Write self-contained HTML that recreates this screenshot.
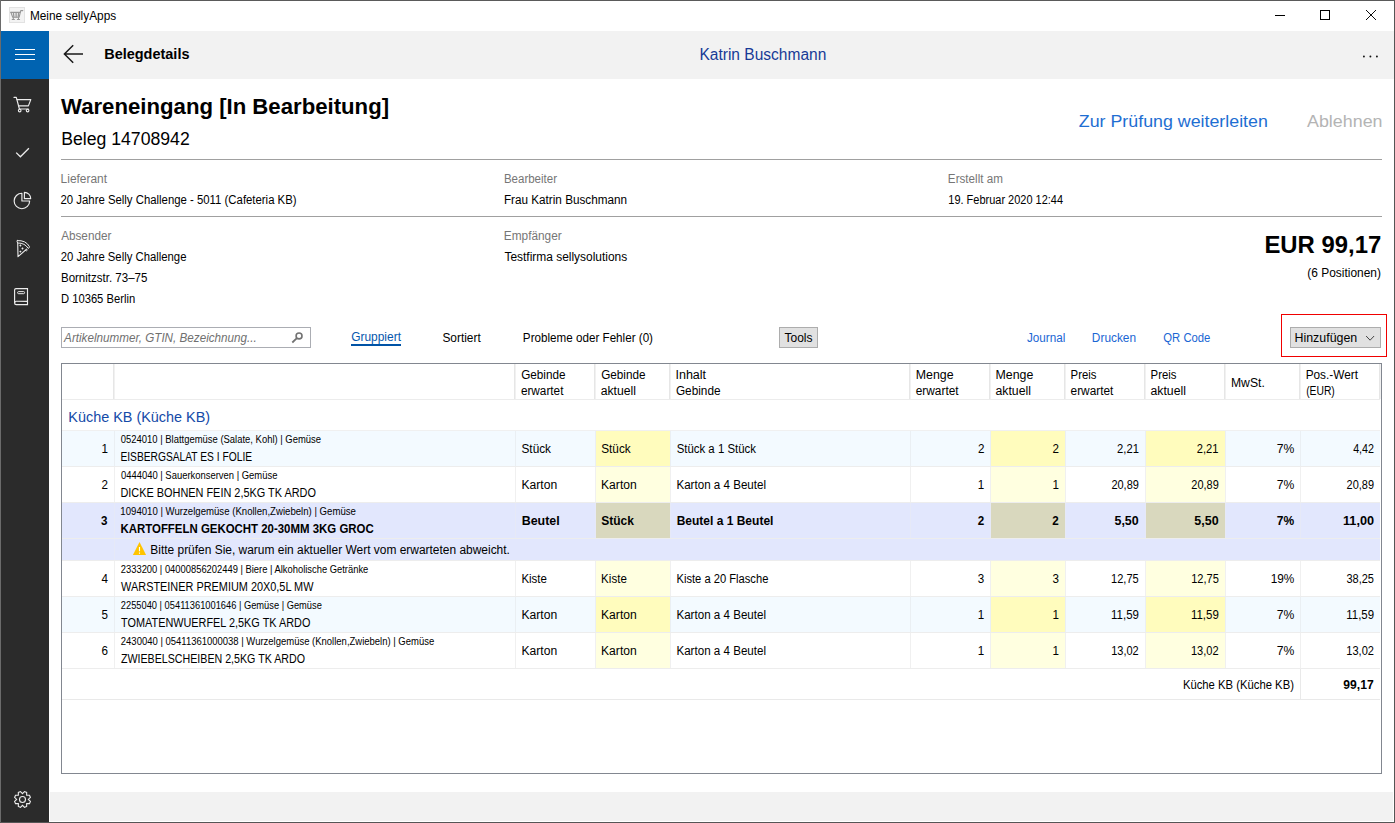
<!DOCTYPE html>
<html lang="de"><head><meta charset="utf-8"><title>Meine sellyApps</title>
<style>
html,body{margin:0;padding:0;width:1395px;height:823px;overflow:hidden;background:#fff;}
body{position:relative;font-family:"Liberation Sans",sans-serif;color:#000;}
.b{position:absolute;}
.t{position:absolute;white-space:nowrap;transform-origin:0 0;}
svg{position:absolute;overflow:visible;}
</style></head><body>
<div class="b" style="left:1px;top:31px;width:1393px;height:48px;background:#f2f2f2;"></div>
<div class="b" style="left:1px;top:31px;width:48px;height:48px;background:#0063b1;"></div>
<div class="b" style="left:1px;top:79px;width:48px;height:743px;background:#2b2b2b;"></div>
<div class="b" style="left:50px;top:792px;width:1343px;height:29px;background:#f2f2f2;"></div>
<div class="b" style="left:15px;top:49px;width:20px;height:1px;background:#fff;"></div>
<div class="b" style="left:15px;top:54px;width:20px;height:1px;background:#fff;"></div>
<div class="b" style="left:15px;top:59px;width:20px;height:1px;background:#fff;"></div>
<div class="b" style="left:61px;top:159px;width:1321px;height:1px;background:#a0a0a0;"></div>
<div class="b" style="left:61px;top:216px;width:1321px;height:1px;background:#a0a0a0;"></div>
<div class="b" style="left:61px;top:327px;width:250px;height:21px;background:#fff;box-sizing:border-box;border:1px solid #abadb3;"></div>
<div class="b" style="left:351px;top:344px;width:50px;height:2px;background:#0053a6;"></div>
<div class="b" style="left:779px;top:327px;width:39px;height:21px;background:#e1e1e1;box-sizing:border-box;border:1px solid #adadad;"></div>
<div class="b" style="left:1281px;top:314px;width:106px;height:43px;background:transparent;box-sizing:border-box;border:1px solid #f00000;"></div>
<div class="b" style="left:1290px;top:327px;width:91px;height:21px;background:#e1e1e1;box-sizing:border-box;border:1px solid #adadad;"></div>
<div class="b" style="left:61px;top:363px;width:1321px;height:411px;background:#fff;box-sizing:border-box;border:1px solid #828790;"></div>
<div class="b" style="left:113px;top:364px;width:1px;height:35px;background:#e6e6e6;"></div>
<div class="b" style="left:114px;top:364px;width:1px;height:35px;background:#f1f1f1;"></div>
<div class="b" style="left:514px;top:364px;width:1px;height:35px;background:#e6e6e6;"></div>
<div class="b" style="left:515px;top:364px;width:1px;height:35px;background:#f1f1f1;"></div>
<div class="b" style="left:594px;top:364px;width:1px;height:35px;background:#e6e6e6;"></div>
<div class="b" style="left:595px;top:364px;width:1px;height:35px;background:#f1f1f1;"></div>
<div class="b" style="left:669px;top:364px;width:1px;height:35px;background:#e6e6e6;"></div>
<div class="b" style="left:670px;top:364px;width:1px;height:35px;background:#f1f1f1;"></div>
<div class="b" style="left:909px;top:364px;width:1px;height:35px;background:#e6e6e6;"></div>
<div class="b" style="left:910px;top:364px;width:1px;height:35px;background:#f1f1f1;"></div>
<div class="b" style="left:989px;top:364px;width:1px;height:35px;background:#e6e6e6;"></div>
<div class="b" style="left:990px;top:364px;width:1px;height:35px;background:#f1f1f1;"></div>
<div class="b" style="left:1064px;top:364px;width:1px;height:35px;background:#e6e6e6;"></div>
<div class="b" style="left:1065px;top:364px;width:1px;height:35px;background:#f1f1f1;"></div>
<div class="b" style="left:1144px;top:364px;width:1px;height:35px;background:#e6e6e6;"></div>
<div class="b" style="left:1145px;top:364px;width:1px;height:35px;background:#f1f1f1;"></div>
<div class="b" style="left:1224px;top:364px;width:1px;height:35px;background:#e6e6e6;"></div>
<div class="b" style="left:1225px;top:364px;width:1px;height:35px;background:#f1f1f1;"></div>
<div class="b" style="left:1299px;top:364px;width:1px;height:35px;background:#e6e6e6;"></div>
<div class="b" style="left:1300px;top:364px;width:1px;height:35px;background:#f1f1f1;"></div>
<div class="b" style="left:1379px;top:364px;width:1px;height:35px;background:#e6e6e6;"></div>
<div class="b" style="left:1380px;top:364px;width:1px;height:35px;background:#f1f1f1;"></div>
<div class="b" style="left:62px;top:399px;width:1318px;height:1px;background:#ececec;"></div>
<div class="b" style="left:62px;top:430px;width:1318px;height:1px;background:#f0f0f0;"></div>
<div class="b" style="left:62px;top:431px;width:1318px;height:35px;background:#f3faff;"></div>
<div class="b" style="left:596px;top:431px;width:74px;height:35px;background:#fffcbd;"></div>
<div class="b" style="left:991px;top:431px;width:74px;height:35px;background:#fffcbd;"></div>
<div class="b" style="left:1146px;top:431px;width:79px;height:35px;background:#fffcbd;"></div>
<div class="b" style="left:114px;top:431px;width:1px;height:35px;background:#eaeff3;"></div>
<div class="b" style="left:515px;top:431px;width:1px;height:35px;background:#eaeff3;"></div>
<div class="b" style="left:595px;top:431px;width:1px;height:35px;background:#eaeff3;"></div>
<div class="b" style="left:670px;top:431px;width:1px;height:35px;background:#eaeff3;"></div>
<div class="b" style="left:910px;top:431px;width:1px;height:35px;background:#eaeff3;"></div>
<div class="b" style="left:990px;top:431px;width:1px;height:35px;background:#eaeff3;"></div>
<div class="b" style="left:1065px;top:431px;width:1px;height:35px;background:#eaeff3;"></div>
<div class="b" style="left:1145px;top:431px;width:1px;height:35px;background:#eaeff3;"></div>
<div class="b" style="left:1225px;top:431px;width:1px;height:35px;background:#eaeff3;"></div>
<div class="b" style="left:1300px;top:431px;width:1px;height:35px;background:#eaeff3;"></div>
<div class="b" style="left:62px;top:466px;width:1318px;height:1px;background:#ededed;"></div>
<div class="b" style="left:62px;top:467px;width:1318px;height:35px;background:#ffffff;"></div>
<div class="b" style="left:596px;top:467px;width:74px;height:35px;background:#ffffe0;"></div>
<div class="b" style="left:991px;top:467px;width:74px;height:35px;background:#ffffe0;"></div>
<div class="b" style="left:1146px;top:467px;width:79px;height:35px;background:#ffffe0;"></div>
<div class="b" style="left:114px;top:467px;width:1px;height:35px;background:#f0f0f0;"></div>
<div class="b" style="left:515px;top:467px;width:1px;height:35px;background:#f0f0f0;"></div>
<div class="b" style="left:595px;top:467px;width:1px;height:35px;background:#f0f0f0;"></div>
<div class="b" style="left:670px;top:467px;width:1px;height:35px;background:#f0f0f0;"></div>
<div class="b" style="left:910px;top:467px;width:1px;height:35px;background:#f0f0f0;"></div>
<div class="b" style="left:990px;top:467px;width:1px;height:35px;background:#f0f0f0;"></div>
<div class="b" style="left:1065px;top:467px;width:1px;height:35px;background:#f0f0f0;"></div>
<div class="b" style="left:1145px;top:467px;width:1px;height:35px;background:#f0f0f0;"></div>
<div class="b" style="left:1225px;top:467px;width:1px;height:35px;background:#f0f0f0;"></div>
<div class="b" style="left:1300px;top:467px;width:1px;height:35px;background:#f0f0f0;"></div>
<div class="b" style="left:62px;top:502px;width:1318px;height:1px;background:#ededed;"></div>
<div class="b" style="left:62px;top:503px;width:1318px;height:35px;background:#e2e7fd;"></div>
<div class="b" style="left:596px;top:503px;width:74px;height:35px;background:#d9d8be;"></div>
<div class="b" style="left:991px;top:503px;width:74px;height:35px;background:#d9d8be;"></div>
<div class="b" style="left:1146px;top:503px;width:79px;height:35px;background:#d9d8be;"></div>
<div class="b" style="left:114px;top:503px;width:1px;height:35px;background:#e6e9f7;"></div>
<div class="b" style="left:515px;top:503px;width:1px;height:35px;background:#e6e9f7;"></div>
<div class="b" style="left:595px;top:503px;width:1px;height:35px;background:#e6e9f7;"></div>
<div class="b" style="left:670px;top:503px;width:1px;height:35px;background:#e6e9f7;"></div>
<div class="b" style="left:910px;top:503px;width:1px;height:35px;background:#e6e9f7;"></div>
<div class="b" style="left:990px;top:503px;width:1px;height:35px;background:#e6e9f7;"></div>
<div class="b" style="left:1065px;top:503px;width:1px;height:35px;background:#e6e9f7;"></div>
<div class="b" style="left:1145px;top:503px;width:1px;height:35px;background:#e6e9f7;"></div>
<div class="b" style="left:1225px;top:503px;width:1px;height:35px;background:#e6e9f7;"></div>
<div class="b" style="left:1300px;top:503px;width:1px;height:35px;background:#e6e9f7;"></div>
<div class="b" style="left:62px;top:538px;width:1318px;height:1px;background:#ededed;"></div>
<div class="b" style="left:62px;top:561px;width:1318px;height:35px;background:#ffffff;"></div>
<div class="b" style="left:596px;top:561px;width:74px;height:35px;background:#ffffe0;"></div>
<div class="b" style="left:991px;top:561px;width:74px;height:35px;background:#ffffe0;"></div>
<div class="b" style="left:1146px;top:561px;width:79px;height:35px;background:#ffffe0;"></div>
<div class="b" style="left:114px;top:561px;width:1px;height:35px;background:#f0f0f0;"></div>
<div class="b" style="left:515px;top:561px;width:1px;height:35px;background:#f0f0f0;"></div>
<div class="b" style="left:595px;top:561px;width:1px;height:35px;background:#f0f0f0;"></div>
<div class="b" style="left:670px;top:561px;width:1px;height:35px;background:#f0f0f0;"></div>
<div class="b" style="left:910px;top:561px;width:1px;height:35px;background:#f0f0f0;"></div>
<div class="b" style="left:990px;top:561px;width:1px;height:35px;background:#f0f0f0;"></div>
<div class="b" style="left:1065px;top:561px;width:1px;height:35px;background:#f0f0f0;"></div>
<div class="b" style="left:1145px;top:561px;width:1px;height:35px;background:#f0f0f0;"></div>
<div class="b" style="left:1225px;top:561px;width:1px;height:35px;background:#f0f0f0;"></div>
<div class="b" style="left:1300px;top:561px;width:1px;height:35px;background:#f0f0f0;"></div>
<div class="b" style="left:62px;top:596px;width:1318px;height:1px;background:#ededed;"></div>
<div class="b" style="left:62px;top:597px;width:1318px;height:35px;background:#f3faff;"></div>
<div class="b" style="left:596px;top:597px;width:74px;height:35px;background:#fffcbd;"></div>
<div class="b" style="left:991px;top:597px;width:74px;height:35px;background:#fffcbd;"></div>
<div class="b" style="left:1146px;top:597px;width:79px;height:35px;background:#fffcbd;"></div>
<div class="b" style="left:114px;top:597px;width:1px;height:35px;background:#eaeff3;"></div>
<div class="b" style="left:515px;top:597px;width:1px;height:35px;background:#eaeff3;"></div>
<div class="b" style="left:595px;top:597px;width:1px;height:35px;background:#eaeff3;"></div>
<div class="b" style="left:670px;top:597px;width:1px;height:35px;background:#eaeff3;"></div>
<div class="b" style="left:910px;top:597px;width:1px;height:35px;background:#eaeff3;"></div>
<div class="b" style="left:990px;top:597px;width:1px;height:35px;background:#eaeff3;"></div>
<div class="b" style="left:1065px;top:597px;width:1px;height:35px;background:#eaeff3;"></div>
<div class="b" style="left:1145px;top:597px;width:1px;height:35px;background:#eaeff3;"></div>
<div class="b" style="left:1225px;top:597px;width:1px;height:35px;background:#eaeff3;"></div>
<div class="b" style="left:1300px;top:597px;width:1px;height:35px;background:#eaeff3;"></div>
<div class="b" style="left:62px;top:632px;width:1318px;height:1px;background:#ededed;"></div>
<div class="b" style="left:62px;top:633px;width:1318px;height:35px;background:#ffffff;"></div>
<div class="b" style="left:596px;top:633px;width:74px;height:35px;background:#ffffe0;"></div>
<div class="b" style="left:991px;top:633px;width:74px;height:35px;background:#ffffe0;"></div>
<div class="b" style="left:1146px;top:633px;width:79px;height:35px;background:#ffffe0;"></div>
<div class="b" style="left:114px;top:633px;width:1px;height:35px;background:#f0f0f0;"></div>
<div class="b" style="left:515px;top:633px;width:1px;height:35px;background:#f0f0f0;"></div>
<div class="b" style="left:595px;top:633px;width:1px;height:35px;background:#f0f0f0;"></div>
<div class="b" style="left:670px;top:633px;width:1px;height:35px;background:#f0f0f0;"></div>
<div class="b" style="left:910px;top:633px;width:1px;height:35px;background:#f0f0f0;"></div>
<div class="b" style="left:990px;top:633px;width:1px;height:35px;background:#f0f0f0;"></div>
<div class="b" style="left:1065px;top:633px;width:1px;height:35px;background:#f0f0f0;"></div>
<div class="b" style="left:1145px;top:633px;width:1px;height:35px;background:#f0f0f0;"></div>
<div class="b" style="left:1225px;top:633px;width:1px;height:35px;background:#f0f0f0;"></div>
<div class="b" style="left:1300px;top:633px;width:1px;height:35px;background:#f0f0f0;"></div>
<div class="b" style="left:62px;top:668px;width:1318px;height:1px;background:#ededed;"></div>
<div class="b" style="left:62px;top:539px;width:1318px;height:21px;background:#e2e7fd;"></div>
<div class="b" style="left:114px;top:539px;width:1px;height:21px;background:#e6e9f7;"></div>
<div class="b" style="left:62px;top:560px;width:1318px;height:1px;background:#ededed;"></div>
<div class="b" style="left:62px;top:699px;width:1318px;height:1px;background:#e9e9e9;"></div>
<div class="b" style="left:1300px;top:669px;width:1px;height:30px;background:#e9e9e9;"></div>
<div class="b" style="left:0px;top:0px;width:1395px;height:1px;background:#5a5a5a;"></div>
<div class="b" style="left:0px;top:0px;width:1px;height:823px;background:#6b6b6b;"></div>
<div class="b" style="left:1394px;top:0px;width:1px;height:823px;background:#555;"></div>
<div class="b" style="left:0px;top:822px;width:1395px;height:1px;background:#555;"></div>
<svg width="1395" height="823" viewBox="0 0 1395 823" style="left:0;top:0;pointer-events:none">
<rect x="9.5" y="7.5" width="15" height="15" fill="#f3f3f3" stroke="#e2e2e2"/>
<g fill="none" stroke="#969696" stroke-width="1.05" stroke-linecap="round" stroke-linejoin="round"><path d="M10.9 12.2 L12.7 17.2 H19.2 L20.7 10.6 H22.8"/><path d="M10.9 12.3 H20.2 M13.4 12.5 L13.9 16.8 M16.1 12.5 V16.8 M18.6 12.5 L18.2 16.8" stroke-width="1.3"/><path d="M13.3 17.4 V19 M18.5 17.4 V19 M12.2 19.4 H14.4 M17.4 19.4 H19.6"/></g>
<g fill="none" stroke="#000" stroke-width="1"><path d="M1275 15.5 H1285"/><rect x="1320.5" y="10.5" width="9" height="9"/><path d="M1366 10 L1376 20 M1376 10 L1366 20" stroke-width="0.95"/></g>
<circle cx="1363.9" cy="56.5" r="0.95" fill="#111"/>
<circle cx="1370.4" cy="56.5" r="0.95" fill="#111"/>
<circle cx="1376.9" cy="56.5" r="0.95" fill="#111"/>
<path d="M83 54 H64.4 M73.2 45.2 L64.4 54 L73.2 62.8" fill="none" stroke="#1a1a1a" stroke-width="1.5"/>
<g fill="none" stroke="#ececec" stroke-width="1.15" stroke-linejoin="round" stroke-linecap="round">
<path d="M14 97.4 H16.3 L19.4 109 H28.4"/><path d="M17 99.6 H30.8 L28.4 105.9 H18.8"/><circle cx="19.7" cy="110.6" r="1.3"/><circle cx="27.6" cy="110.6" r="1.3"/>
<path d="M16.2 152.6 L20.4 156.8 L28.9 148.3" stroke-width="1.3" stroke-linecap="butt" stroke-linejoin="miter"/>
<path d="M21.9 193.2 A7.75 7.75 0 1 0 29.65 200.95 H21.9 Z"/><path d="M24.4 192.3 A6.3 6.3 0 0 1 30.7 198.6 H24.4 Z"/>
<path d="M17.3 240.6 Q25.8 240 29.5 246.7 Q29.5 247.9 28.2 248.4 Q24.9 242.9 17.7 243 Q16.5 241.8 17.3 240.6 Z" stroke-width="1"/><path d="M17.7 243.2 L18 256.7 L26.6 249.2" stroke-width="1.1"/><path d="M25.2 250.3 Q26.2 251.9 27.4 250.2" stroke-width="0.9"/>
</g>
<rect x="19.599999999999998" y="244.7" width="1.6" height="1.6" fill="#ececec" transform="rotate(45 20.4 245.5)"/>
<rect x="21.7" y="247.7" width="1.6" height="1.6" fill="#ececec" transform="rotate(45 22.5 248.5)"/>
<rect x="19.599999999999998" y="250.79999999999998" width="1.6" height="1.6" fill="#ececec" transform="rotate(45 20.4 251.6)"/>

<g fill="none" stroke="#ececec" stroke-width="1.15"><path d="M16 288.6 H27.5 V304.6 H16.3 A1.7 1.7 0 0 1 14.6 302.9 V290 A1.4 1.4 0 0 1 16 288.6 Z"/><path d="M14.8 302.6 A1.5 1.5 0 0 1 16.3 301.3 H27.5"/><rect x="17.6" y="291.6" width="7" height="2.1" rx="1" stroke-width="1"/></g>
<path d="M22.50 793.60 L24.50 791.55 L26.67 792.45 L26.64 795.31 L29.50 795.28 L30.40 797.45 L28.35 799.45 L30.40 801.45 L29.50 803.62 L26.64 803.59 L26.67 806.45 L24.50 807.35 L22.50 805.30 L20.50 807.35 L18.33 806.45 L18.36 803.59 L15.50 803.62 L14.60 801.45 L16.65 799.45 L14.60 797.45 L15.50 795.28 L18.36 795.31 L18.33 792.45 L20.50 791.55 Z" fill="none" stroke="#ececec" stroke-width="1.1" stroke-linejoin="miter"/><circle cx="22.5" cy="799.45" r="3" fill="none" stroke="#ececec" stroke-width="1.1"/>
<g fill="none" stroke="#727272" stroke-width="1.6"><circle cx="299.05" cy="335.95" r="2.95"/><path d="M296.9 338.1 L292.3 342.5" stroke-width="1.8"/></g>
<path d="M1366.1 336 L1370.1 340.2 L1374.1 336" fill="none" stroke="#444" stroke-width="1"/>
<path d="M139.5 541.9 L146.1 555 H132.9 Z" fill="#ffc400"/><path d="M139.5 547 V551.3 M139.5 552.4 V553.8" stroke="#fff" stroke-width="1.1"/>
</svg>
<span class="t" style="left:29px;top:7px;line-height:18px;font-size:12.5px;transform:translateX(0.92px) scaleX(0.9472);">Meine sellyApps</span>
<span class="t" style="left:104px;top:43px;line-height:22px;font-size:15.5px;font-weight:bold;transform:translateX(0.18px) scaleX(0.9338);">Belegdetails</span>
<span class="t" style="left:699px;top:44px;line-height:22px;font-size:16px;transform:translateX(0.46px) scaleX(0.9701);color:#173a96;">Katrin Buschmann</span>
<span class="t" style="left:61px;top:92px;line-height:30px;font-size:21.5px;font-weight:bold;transform:translateX(0.07px) scaleX(1.0310);">Wareneingang [In Bearbeitung]</span>
<span class="t" style="left:61px;top:127px;line-height:25px;font-size:18px;transform:translateX(0.16px) scaleX(0.9804);">Beleg 14708942</span>
<span class="t" style="left:1078px;top:110px;line-height:24px;font-size:17px;transform:translateX(0.84px) scaleX(1.0474);color:#1e6ed2;">Zur Prüfung weiterleiten</span>
<span class="t" style="left:1307px;top:110px;line-height:24px;font-size:17px;transform:translateX(0.01px) scaleX(1.0508);color:#b4b4b4;">Ablehnen</span>
<span class="t" style="left:60px;top:170px;line-height:18px;font-size:12.5px;transform:translateX(0.62px) scaleX(0.9527);color:#767676;">Lieferant</span>
<span class="t" style="left:60px;top:191px;line-height:18px;font-size:12.5px;transform:translateX(0.53px) scaleX(0.9091);">20 Jahre Selly Challenge - 5011 (Cafeteria KB)</span>
<span class="t" style="left:503px;top:170px;line-height:18px;font-size:12.5px;transform:translateX(0.91px) scaleX(0.9205);color:#767676;">Bearbeiter</span>
<span class="t" style="left:503px;top:191px;line-height:18px;font-size:12.5px;transform:translateX(0.88px) scaleX(0.9381);">Frau Katrin Buschmann</span>
<span class="t" style="left:947px;top:170px;line-height:18px;font-size:12.5px;transform:translateX(0.87px) scaleX(0.9318);color:#767676;">Erstellt am</span>
<span class="t" style="left:948px;top:191px;line-height:18px;font-size:12.5px;transform:translateX(0.31px) scaleX(0.8780);">19. Februar 2020 12:44</span>
<span class="t" style="left:61px;top:227px;line-height:18px;font-size:12.5px;transform:translateX(0.13px) scaleX(0.9393);color:#767676;">Absender</span>
<span class="t" style="left:60px;top:248px;line-height:18px;font-size:12.5px;transform:translateX(0.65px) scaleX(0.9050);">20 Jahre Selly Challenge</span>
<span class="t" style="left:60px;top:269px;line-height:18px;font-size:12.5px;transform:translateX(0.94px) scaleX(0.9218);">Bornitzstr. 73–75</span>
<span class="t" style="left:60px;top:290px;line-height:18px;font-size:12.5px;transform:translateX(0.99px) scaleX(0.8964);">D 10365 Berlin</span>
<span class="t" style="left:503px;top:227px;line-height:18px;font-size:12.5px;transform:translateX(0.80px) scaleX(0.9466);color:#767676;">Empfänger</span>
<span class="t" style="left:504px;top:248px;line-height:18px;font-size:12.5px;transform:translateX(0.46px) scaleX(0.9549);">Testfirma sellysolutions</span>
<span class="t" style="left:1264px;top:228px;line-height:34px;font-size:24px;font-weight:bold;transform:translateX(0.45px) scaleX(0.9942);">EUR 99,17</span>
<span class="t" style="left:1307px;top:264px;line-height:18px;font-size:12.5px;transform:translateX(0.34px) scaleX(0.9538);">(6 Positionen)</span>
<span class="t" style="left:64px;top:329px;line-height:18px;font-size:12.5px;font-style:italic;transform:translateX(0.11px) scaleX(0.9336);color:#707070;">Artikelnummer, GTIN, Bezeichnung...</span>
<span class="t" style="left:351px;top:328px;line-height:18px;font-size:12.5px;transform:translateX(0.22px) scaleX(0.9542);color:#0557ad;">Gruppiert</span>
<span class="t" style="left:442px;top:329px;line-height:18px;font-size:12.5px;transform:translateX(0.38px) scaleX(0.9517);">Sortiert</span>
<span class="t" style="left:522px;top:329px;line-height:18px;font-size:12.5px;transform:translateX(0.87px) scaleX(0.9319);">Probleme oder Fehler (0)</span>
<span class="t" style="left:784px;top:329px;line-height:18px;font-size:12.5px;transform:translateX(0.50px) scaleX(0.9604);">Tools</span>
<span class="t" style="left:1026px;top:329px;line-height:18px;font-size:12.5px;transform:translateX(0.94px) scaleX(0.9358);color:#1a66d4;">Journal</span>
<span class="t" style="left:1091px;top:329px;line-height:18px;font-size:12.5px;transform:translateX(0.86px) scaleX(0.9492);color:#1a66d4;">Drucken</span>
<span class="t" style="left:1163px;top:329px;line-height:18px;font-size:12.5px;transform:translateX(0.30px) scaleX(0.9039);color:#1a66d4;">QR Code</span>
<span class="t" style="left:1294px;top:329px;line-height:18px;font-size:12.5px;transform:translateX(0.50px) scaleX(0.9915);">Hinzufügen</span>
<span class="t" style="left:521px;top:366px;line-height:18px;font-size:12.5px;transform:translateX(0.15px) scaleX(0.9397);">Gebinde</span>
<span class="t" style="left:520px;top:382px;line-height:18px;font-size:12.5px;transform:translateX(0.89px) scaleX(0.9424);">erwartet</span>
<span class="t" style="left:601px;top:366px;line-height:18px;font-size:12.5px;transform:translateX(0.15px) scaleX(0.9397);">Gebinde</span>
<span class="t" style="left:600px;top:382px;line-height:18px;font-size:12.5px;transform:translateX(0.70px) scaleX(0.9779);">aktuell</span>
<span class="t" style="left:675px;top:366px;line-height:18px;font-size:12.5px;transform:translateX(0.47px) scaleX(1.0016);">Inhalt</span>
<span class="t" style="left:675px;top:382px;line-height:18px;font-size:12.5px;transform:translateX(0.89px) scaleX(0.9444);">Gebinde</span>
<span class="t" style="left:915px;top:366px;line-height:18px;font-size:12.5px;transform:translateX(0.77px) scaleX(0.9897);">Menge</span>
<span class="t" style="left:915px;top:382px;line-height:18px;font-size:12.5px;transform:translateX(0.77px) scaleX(0.9477);">erwartet</span>
<span class="t" style="left:995px;top:366px;line-height:18px;font-size:12.5px;transform:translateX(0.54px) scaleX(0.9894);">Menge</span>
<span class="t" style="left:995px;top:382px;line-height:18px;font-size:12.5px;transform:translateX(0.51px) scaleX(0.9810);">aktuell</span>
<span class="t" style="left:1070px;top:366px;line-height:18px;font-size:12.5px;transform:translateX(0.56px) scaleX(0.9092);">Preis</span>
<span class="t" style="left:1070px;top:382px;line-height:18px;font-size:12.5px;transform:translateX(0.57px) scaleX(0.9475);">erwartet</span>
<span class="t" style="left:1150px;top:366px;line-height:18px;font-size:12.5px;transform:translateX(0.56px) scaleX(0.9092);">Preis</span>
<span class="t" style="left:1150px;top:382px;line-height:18px;font-size:12.5px;transform:translateX(0.46px) scaleX(0.9809);">aktuell</span>
<span class="t" style="left:1305px;top:366px;line-height:18px;font-size:12.5px;transform:translateX(0.64px) scaleX(0.9458);">Pos.-Wert</span>
<span class="t" style="left:1306px;top:382px;line-height:18px;font-size:12.5px;transform:translateX(0.14px) scaleX(0.8258);">(EUR)</span>
<span class="t" style="left:1230px;top:374px;line-height:18px;font-size:12.5px;transform:translateX(0.95px) scaleX(0.9745);">MwSt.</span>
<span class="t" style="left:68px;top:406px;line-height:22px;font-size:15.5px;transform:translateX(0.28px) scaleX(0.9303);color:#144aa8;">Küche KB (Küche KB)</span>
<span class="t" style="left:101px;top:440px;line-height:18px;font-size:12.5px;transform:translateX(0.41px) scaleX(0.9300);">1</span>
<span class="t" style="left:120px;top:433px;line-height:14px;font-size:10px;transform:translateX(0.78px) scaleX(0.9448);">0524010 | Blattgemüse (Salate, Kohl) | Gemüse</span>
<span class="t" style="left:120px;top:448px;line-height:18px;font-size:12.5px;transform:translateX(0.38px) scaleX(0.8194);">EISBERGSALAT ES I FOLIE</span>
<span class="t" style="left:521px;top:440px;line-height:18px;font-size:12.5px;transform:translateX(0.50px) scaleX(0.9443);">Stück</span>
<span class="t" style="left:601px;top:440px;line-height:18px;font-size:12.5px;transform:translateX(0.23px) scaleX(0.9422);">Stück</span>
<span class="t" style="left:676px;top:440px;line-height:18px;font-size:12.5px;transform:translateX(0.67px) scaleX(0.9126);">Stück a 1 Stück</span>
<span class="t" style="left:978px;top:440px;line-height:18px;font-size:12.5px;transform:translateX(0.08px) scaleX(0.9300);">2</span>
<span class="t" style="left:1052px;top:440px;line-height:18px;font-size:12.5px;transform:translateX(0.54px) scaleX(0.9300);">2</span>
<span class="t" style="left:1117px;top:440px;line-height:18px;font-size:12.5px;transform:translateX(0.05px) scaleX(0.8976);">2,21</span>
<span class="t" style="left:1196px;top:440px;line-height:18px;font-size:12.5px;transform:translateX(0.77px) scaleX(0.8918);">2,21</span>
<span class="t" style="left:1276px;top:440px;line-height:18px;font-size:12.5px;transform:translateX(0.74px) scaleX(0.9727);">7%</span>
<span class="t" style="left:1353px;top:440px;line-height:18px;font-size:12.5px;transform:translateX(0.14px) scaleX(0.8590);">4,42</span>
<span class="t" style="left:101px;top:476px;line-height:18px;font-size:12.5px;transform:translateX(0.54px) scaleX(0.9300);">2</span>
<span class="t" style="left:120px;top:469px;line-height:14px;font-size:10px;transform:translateX(0.94px) scaleX(0.9435);">0444040 | Sauerkonserven | Gemüse</span>
<span class="t" style="left:120px;top:484px;line-height:18px;font-size:12.5px;transform:translateX(0.39px) scaleX(0.8726);">DICKE BOHNEN FEIN 2,5KG TK ARDO</span>
<span class="t" style="left:521px;top:476px;line-height:18px;font-size:12.5px;transform:translateX(0.48px) scaleX(0.9709);">Karton</span>
<span class="t" style="left:601px;top:476px;line-height:18px;font-size:12.5px;transform:translateX(0.04px) scaleX(0.9686);">Karton</span>
<span class="t" style="left:676px;top:476px;line-height:18px;font-size:12.5px;transform:translateX(0.42px) scaleX(0.9279);">Karton a 4 Beutel</span>
<span class="t" style="left:977px;top:476px;line-height:18px;font-size:12.5px;transform:translateX(0.84px) scaleX(0.9300);">1</span>
<span class="t" style="left:1052px;top:476px;line-height:18px;font-size:12.5px;transform:translateX(0.41px) scaleX(0.9300);">1</span>
<span class="t" style="left:1111px;top:476px;line-height:18px;font-size:12.5px;transform:translateX(0.38px) scaleX(0.8777);">20,89</span>
<span class="t" style="left:1191px;top:476px;line-height:18px;font-size:12.5px;transform:translateX(0.34px) scaleX(0.8752);">20,89</span>
<span class="t" style="left:1276px;top:476px;line-height:18px;font-size:12.5px;transform:translateX(0.74px) scaleX(0.9727);">7%</span>
<span class="t" style="left:1346px;top:476px;line-height:18px;font-size:12.5px;transform:translateX(0.60px) scaleX(0.8751);">20,89</span>
<span class="t" style="left:101px;top:512px;line-height:18px;font-size:12.5px;font-weight:bold;transform:translateX(0.09px) scaleX(0.9300);">3</span>
<span class="t" style="left:120px;top:505px;line-height:14px;font-size:10px;transform:translateX(0.34px) scaleX(0.9611);">1094010 | Wurzelgemüse (Knollen,Zwiebeln) | Gemüse</span>
<span class="t" style="left:120px;top:520px;line-height:18px;font-size:12.5px;font-weight:bold;transform:translateX(0.45px) scaleX(0.9146);">KARTOFFELN GEKOCHT 20-30MM 3KG GROC</span>
<span class="t" style="left:521px;top:512px;line-height:18px;font-size:12.5px;font-weight:bold;transform:translateX(0.66px) scaleX(0.9965);">Beutel</span>
<span class="t" style="left:601px;top:512px;line-height:18px;font-size:12.5px;font-weight:bold;transform:translateX(0.27px) scaleX(0.9607);">Stück</span>
<span class="t" style="left:676px;top:512px;line-height:18px;font-size:12.5px;font-weight:bold;transform:translateX(0.67px) scaleX(0.9602);">Beutel a 1 Beutel</span>
<span class="t" style="left:977px;top:512px;line-height:18px;font-size:12.5px;font-weight:bold;transform:translateX(0.73px) scaleX(0.9300);">2</span>
<span class="t" style="left:1052px;top:512px;line-height:18px;font-size:12.5px;font-weight:bold;transform:translateX(0.23px) scaleX(0.9300);">2</span>
<span class="t" style="left:1114px;top:512px;line-height:18px;font-size:12.5px;font-weight:bold;transform:translateX(0.47px) scaleX(0.9958);">5,50</span>
<span class="t" style="left:1194px;top:512px;line-height:18px;font-size:12.5px;font-weight:bold;transform:translateX(0.35px) scaleX(0.9978);">5,50</span>
<span class="t" style="left:1276px;top:512px;line-height:18px;font-size:12.5px;font-weight:bold;transform:translateX(0.75px) scaleX(0.9587);">7%</span>
<span class="t" style="left:1342px;top:512px;line-height:18px;font-size:12.5px;font-weight:bold;transform:translateX(0.95px) scaleX(1.0168);">11,00</span>
<span class="t" style="left:101px;top:570px;line-height:18px;font-size:12.5px;transform:translateX(0.44px) scaleX(0.9300);">4</span>
<span class="t" style="left:120px;top:563px;line-height:14px;font-size:10px;transform:translateX(0.78px) scaleX(0.9372);">2333200 | 04000856202449 | Biere | Alkoholische Getränke</span>
<span class="t" style="left:121px;top:578px;line-height:18px;font-size:12.5px;transform:translateX(0.11px) scaleX(0.8719);">WARSTEINER PREMIUM 20X0,5L MW</span>
<span class="t" style="left:521px;top:570px;line-height:18px;font-size:12.5px;transform:translateX(0.40px) scaleX(0.9192);">Kiste</span>
<span class="t" style="left:601px;top:570px;line-height:18px;font-size:12.5px;transform:translateX(0.12px) scaleX(0.9241);">Kiste</span>
<span class="t" style="left:676px;top:570px;line-height:18px;font-size:12.5px;transform:translateX(0.48px) scaleX(0.8937);">Kiste a 20 Flasche</span>
<span class="t" style="left:977px;top:570px;line-height:18px;font-size:12.5px;transform:translateX(0.84px) scaleX(0.9300);">3</span>
<span class="t" style="left:1052px;top:570px;line-height:18px;font-size:12.5px;transform:translateX(0.55px) scaleX(0.9300);">3</span>
<span class="t" style="left:1111px;top:570px;line-height:18px;font-size:12.5px;transform:translateX(0.08px) scaleX(0.8839);">12,75</span>
<span class="t" style="left:1191px;top:570px;line-height:18px;font-size:12.5px;transform:translateX(0.13px) scaleX(0.8841);">12,75</span>
<span class="t" style="left:1270px;top:570px;line-height:18px;font-size:12.5px;transform:translateX(0.63px) scaleX(0.9454);">19%</span>
<span class="t" style="left:1346px;top:570px;line-height:18px;font-size:12.5px;transform:translateX(0.45px) scaleX(0.8806);">38,25</span>
<span class="t" style="left:101px;top:606px;line-height:18px;font-size:12.5px;transform:translateX(0.45px) scaleX(0.9300);">5</span>
<span class="t" style="left:120px;top:599px;line-height:14px;font-size:10px;transform:translateX(0.83px) scaleX(0.9300);">2255040 | 05411361001646 | Gemüse | Gemüse</span>
<span class="t" style="left:121px;top:614px;line-height:18px;font-size:12.5px;transform:translateX(0.09px) scaleX(0.8696);">TOMATENWUERFEL 2,5KG TK ARDO</span>
<span class="t" style="left:521px;top:606px;line-height:18px;font-size:12.5px;transform:translateX(0.48px) scaleX(0.9709);">Karton</span>
<span class="t" style="left:601px;top:606px;line-height:18px;font-size:12.5px;transform:translateX(0.04px) scaleX(0.9686);">Karton</span>
<span class="t" style="left:676px;top:606px;line-height:18px;font-size:12.5px;transform:translateX(0.42px) scaleX(0.9279);">Karton a 4 Beutel</span>
<span class="t" style="left:977px;top:606px;line-height:18px;font-size:12.5px;transform:translateX(0.84px) scaleX(0.9300);">1</span>
<span class="t" style="left:1052px;top:606px;line-height:18px;font-size:12.5px;transform:translateX(0.41px) scaleX(0.9300);">1</span>
<span class="t" style="left:1111px;top:606px;line-height:18px;font-size:12.5px;transform:translateX(0.08px) scaleX(0.9156);">11,59</span>
<span class="t" style="left:1190px;top:606px;line-height:18px;font-size:12.5px;transform:translateX(0.92px) scaleX(0.9179);">11,59</span>
<span class="t" style="left:1276px;top:606px;line-height:18px;font-size:12.5px;transform:translateX(0.74px) scaleX(0.9727);">7%</span>
<span class="t" style="left:1346px;top:606px;line-height:18px;font-size:12.5px;transform:translateX(0.27px) scaleX(0.9152);">11,59</span>
<span class="t" style="left:101px;top:642px;line-height:18px;font-size:12.5px;transform:translateX(0.45px) scaleX(0.9300);">6</span>
<span class="t" style="left:120px;top:635px;line-height:14px;font-size:10px;transform:translateX(0.82px) scaleX(0.9485);">2430040 | 05411361000038 | Wurzelgemüse (Knollen,Zwiebeln) | Gemüse</span>
<span class="t" style="left:120px;top:650px;line-height:18px;font-size:12.5px;transform:translateX(0.88px) scaleX(0.8531);">ZWIEBELSCHEIBEN 2,5KG TK ARDO</span>
<span class="t" style="left:521px;top:642px;line-height:18px;font-size:12.5px;transform:translateX(0.48px) scaleX(0.9709);">Karton</span>
<span class="t" style="left:601px;top:642px;line-height:18px;font-size:12.5px;transform:translateX(0.04px) scaleX(0.9686);">Karton</span>
<span class="t" style="left:676px;top:642px;line-height:18px;font-size:12.5px;transform:translateX(0.42px) scaleX(0.9279);">Karton a 4 Beutel</span>
<span class="t" style="left:977px;top:642px;line-height:18px;font-size:12.5px;transform:translateX(0.84px) scaleX(0.9300);">1</span>
<span class="t" style="left:1052px;top:642px;line-height:18px;font-size:12.5px;transform:translateX(0.41px) scaleX(0.9300);">1</span>
<span class="t" style="left:1111px;top:642px;line-height:18px;font-size:12.5px;transform:translateX(0.18px) scaleX(0.8798);">13,02</span>
<span class="t" style="left:1190px;top:642px;line-height:18px;font-size:12.5px;transform:translateX(0.91px) scaleX(0.8860);">13,02</span>
<span class="t" style="left:1276px;top:642px;line-height:18px;font-size:12.5px;transform:translateX(0.74px) scaleX(0.9727);">7%</span>
<span class="t" style="left:1346px;top:642px;line-height:18px;font-size:12.5px;transform:translateX(0.28px) scaleX(0.8846);">13,02</span>
<span class="t" style="left:150px;top:541px;line-height:18px;font-size:12.5px;transform:translateX(0.27px) scaleX(0.9556);">Bitte prüfen Sie, warum ein aktueller Wert vom erwarteten abweicht.</span>
<span class="t" style="left:1182px;top:676px;line-height:18px;font-size:12.5px;transform:translateX(0.90px) scaleX(0.9027);">Küche KB (Küche KB)</span>
<span class="t" style="left:1343px;top:676px;line-height:18px;font-size:12.5px;font-weight:bold;transform:translateX(0.35px) scaleX(0.9703);">99,17</span>
</body></html>
